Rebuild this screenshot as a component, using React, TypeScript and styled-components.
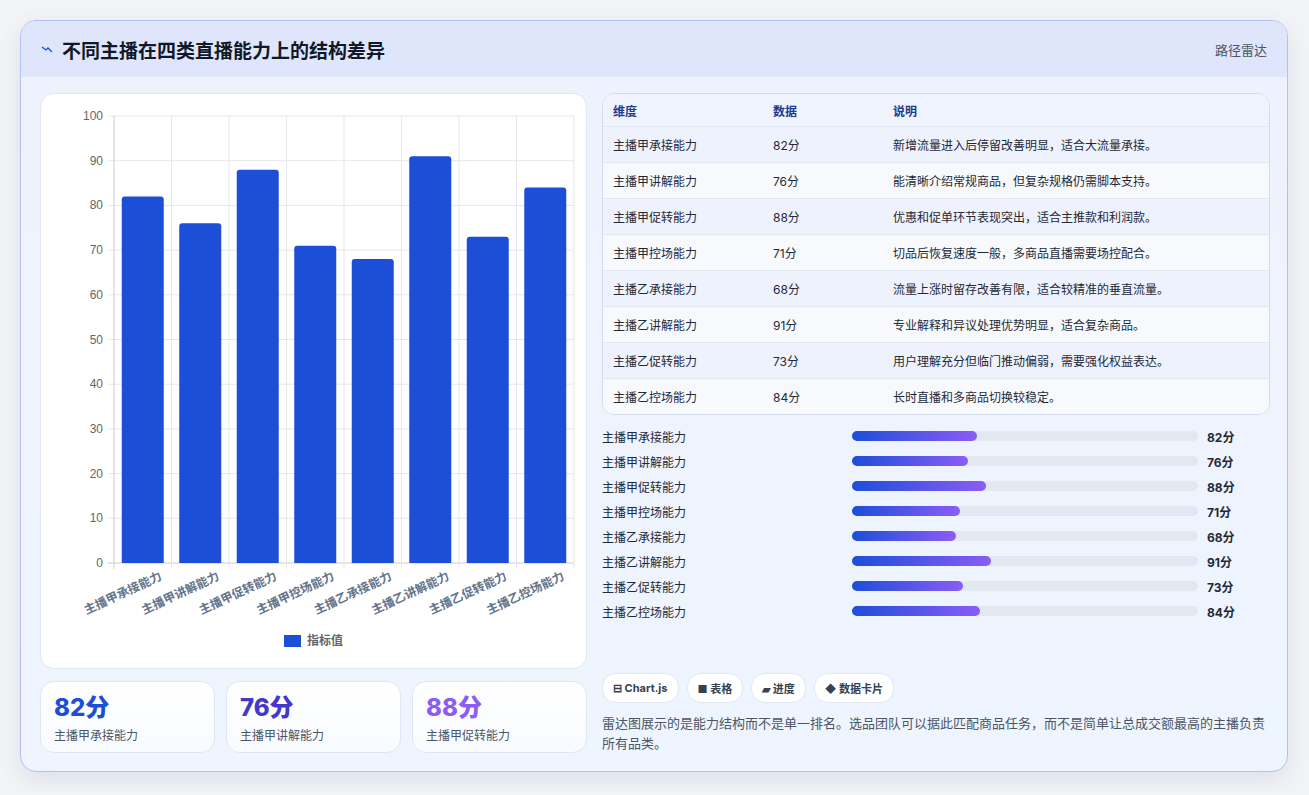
import React from "react";
import styled, { createGlobalStyle } from "styled-components";

const G = createGlobalStyle`
  html,body{margin:0;padding:0;background:#f3f4f6;}
  body{font-family:"Inter","Noto Sans CJK SC",sans-serif;}
`;

const rows = [
  ["主播甲承接能力", 82, "新增流量进入后停留改善明显，适合大流量承接。"],
  ["主播甲讲解能力", 76, "能清晰介绍常规商品，但复杂规格仍需脚本支持。"],
  ["主播甲促转能力", 88, "优惠和促单环节表现突出，适合主推款和利润款。"],
  ["主播甲控场能力", 71, "切品后恢复速度一般，多商品直播需要场控配合。"],
  ["主播乙承接能力", 68, "流量上涨时留存改善有限，适合较精准的垂直流量。"],
  ["主播乙讲解能力", 91, "专业解释和异议处理优势明显，适合复杂商品。"],
  ["主播乙促转能力", 73, "用户理解充分但临门推动偏弱，需要强化权益表达。"],
  ["主播乙控场能力", 84, "长时直播和多商品切换较稳定。"],
] as [string, number, string][];

const Page = styled.div`padding:20px 21px 21px 20px;`;
const Card = styled.div`
  border:1px solid #b4c0ee;border-radius:16px;overflow:hidden;
  background:linear-gradient(180deg,#eef2fd,#eef5ff);
  box-shadow:0 8px 24px rgba(60,80,160,.12);
`;
const Header = styled.div`
  height:56px;display:flex;align-items:center;justify-content:space-between;
  padding:0 20px;background:#dfe6fb;
`;
const Title = styled.h1`
  margin:0;font-size:19px;font-weight:700;color:#111827;display:flex;align-items:center;gap:9px;
`;
const Tag = styled.span`font-size:13px;color:#4b5563;`;
const Body = styled.div`display:grid;grid-template-columns:547px 668px;gap:15px;padding:16px 19px 18px 19px;`;
const Col = styled.div`display:flex;flex-direction:column;`;
const ChartBox = styled.div`
  height:576px;background:#fff;border:1px solid #e0e6f3;border-radius:14px;box-sizing:border-box;
`;
const Stats = styled.div`display:grid;grid-template-columns:repeat(3,1fr);gap:11px;margin-top:12px;`;
const Stat = styled.div`
  height:72px;background:linear-gradient(180deg,#fff,#f8fbff);border:1px solid #e0e6f3;border-radius:14px;
  padding:11px 13px;box-sizing:border-box;
`;
const StatNum = styled.div<{ c: string }>`font-size:24px;font-weight:800;color:${p => p.c};line-height:30px;`;
const StatLbl = styled.div`font-size:12px;color:#4b5563;margin-top:3px;`;
const Table = styled.div`
  border:1px solid #d3dbee;border-radius:12px;overflow:hidden;background:#fff;
`;
const Tr = styled.div<{ head?: boolean; alt?: boolean }>`
  display:grid;grid-template-columns:160px 120px 1fr;align-items:center;padding-left:10px;
  height:${p => (p.head ? 32 : 35)}px;font-size:12px;
  color:${p => (p.head ? "#1e3a8a" : "#1f2937")};
  background:${p => (p.head ? "#eef3fd" : p.alt ? "#f7f9fc" : "#eef2fd")};
  border-bottom:1px solid #e1e7f3;
  &:last-child{border-bottom:none;}
`;
const Bars = styled.div`display:flex;flex-direction:column;gap:7px;margin-top:12px;`;
const BarRow = styled.div`display:grid;grid-template-columns:250px 346px 1fr;align-items:center;height:18px;font-size:12px;color:#1f2937;`;
const Track = styled.div`height:10px;background:#e2e8f0;border-radius:5px;`;
const Fill = styled.div`height:10px;border-radius:5px;background:linear-gradient(90deg,#1d4ed8,#8b5cf6);`;
const Val = styled.span`font-weight:700;padding-left:9px;`;
const Chips = styled.div`display:flex;gap:8px;margin-top:auto;`;
const Chip = styled.span`
  height:28px;padding:0 10px;display:inline-flex;align-items:center;gap:3px;border-radius:14px;
  background:#fff;border:1px solid #e3e8f3;font-size:11px;font-weight:700;color:#374151;
`;
const Note = styled.p`margin:10px 0 0;font-size:13px;line-height:20px;color:#4b5563;`;

function Chart() {
  const x0 = 73, x1 = 533, y0 = 22, y1 = 469;
  const cw = (x1 - x0) / 8;
  const yv = (v: number) => y1 - (v / 100) * (y1 - y0);
  return (
    <svg width="545" height="574" style={{ display: "block" }}>
      {Array.from({ length: 11 }, (_, i) => (
        <g key={i}>
          <line x1={x0 - 6} x2={x1} y1={yv(i * 10)} y2={yv(i * 10)} stroke={i === 0 ? "#ccc" : "#e5e7eb"} />
          <text x={x0 - 11} y={yv(i * 10) + 4} textAnchor="end" fontSize="12" fill="#666" fontFamily="Liberation Sans">{i * 10}</text>
        </g>
      ))}
      {Array.from({ length: 9 }, (_, i) => (
        <line key={i} x1={x0 + i * cw} x2={x0 + i * cw} y1={y0} y2={y1 + 6} stroke={i === 0 ? "#ccc" : "#e5e7eb"} />
      ))}
      {rows.map(([n, v], i) => {
        const cx = x0 + cw * i + cw / 2;
        return (
          <g key={n}>
            <path d={`M${cx - 21} ${y1} V${yv(v) + 3} Q${cx - 21} ${yv(v)} ${cx - 18} ${yv(v)} H${cx + 18} Q${cx + 21} ${yv(v)} ${cx + 21} ${yv(v) + 3} V${y1} Z`} fill="#1d4ed8" />
            <text transform={`translate(${cx + 20},${y1 + 16}) rotate(-25)`} textAnchor="end" fontSize="12" fontWeight="700" fill="#64748b">{n}</text>
          </g>
        );
      })}
      <rect x="243" y="541" width="17" height="12" fill="#1d4ed8" />
      <text x="266" y="551" fontSize="12" fontWeight="700" fill="#666">指标值</text>
    </svg>
  );
}

export default function App() {
  return (
    <Page>
      <G />
      <Card>
        <Header>
          <Title>
            <svg width="12" height="10" viewBox="0 0 12 10"><path d="M1 3 L5 6 L7 4 L11 8" stroke="#1d4ed8" strokeWidth="1.3" fill="none" /></svg>
            不同主播在四类直播能力上的结构差异
          </Title>
          <Tag>路径雷达</Tag>
        </Header>
        <Body>
          <Col>
            <ChartBox><Chart /></ChartBox>
            <Stats>
              <Stat><StatNum c="#1d4ed8">82分</StatNum><StatLbl>主播甲承接能力</StatLbl></Stat>
              <Stat><StatNum c="#4338ca">76分</StatNum><StatLbl>主播甲讲解能力</StatLbl></Stat>
              <Stat><StatNum c="#8b5cf6">88分</StatNum><StatLbl>主播甲促转能力</StatLbl></Stat>
            </Stats>
          </Col>
          <Col>
            <Table>
              <Tr head><b>维度</b><b>数据</b><b>说明</b></Tr>
              {rows.map(([n, v, d], i) => (
                <Tr key={n} alt={i % 2 === 1}><span>{n}</span><span>{v}分</span><span>{d}</span></Tr>
              ))}
            </Table>
            <Bars>
              {rows.map(([n, v]) => (
                <BarRow key={n}>
                  <span>{n}</span>
                  <Track><Fill style={{ width: `${v * 0.44}%` }} /></Track>
                  <Val>{v}分</Val>
                </BarRow>
              ))}
            </Bars>
            <Chips>
              <Chip>⊟ Chart.js</Chip><Chip>■ 表格</Chip><Chip>▰ 进度</Chip><Chip>◆ 数据卡片</Chip>
            </Chips>
            <Note>雷达图展示的是能力结构而不是单一排名。选品团队可以据此匹配商品任务，而不是简单让总成交额最高的主播负责所有品类。</Note>
          </Col>
        </Body>
      </Card>
    </Page>
  );
}
